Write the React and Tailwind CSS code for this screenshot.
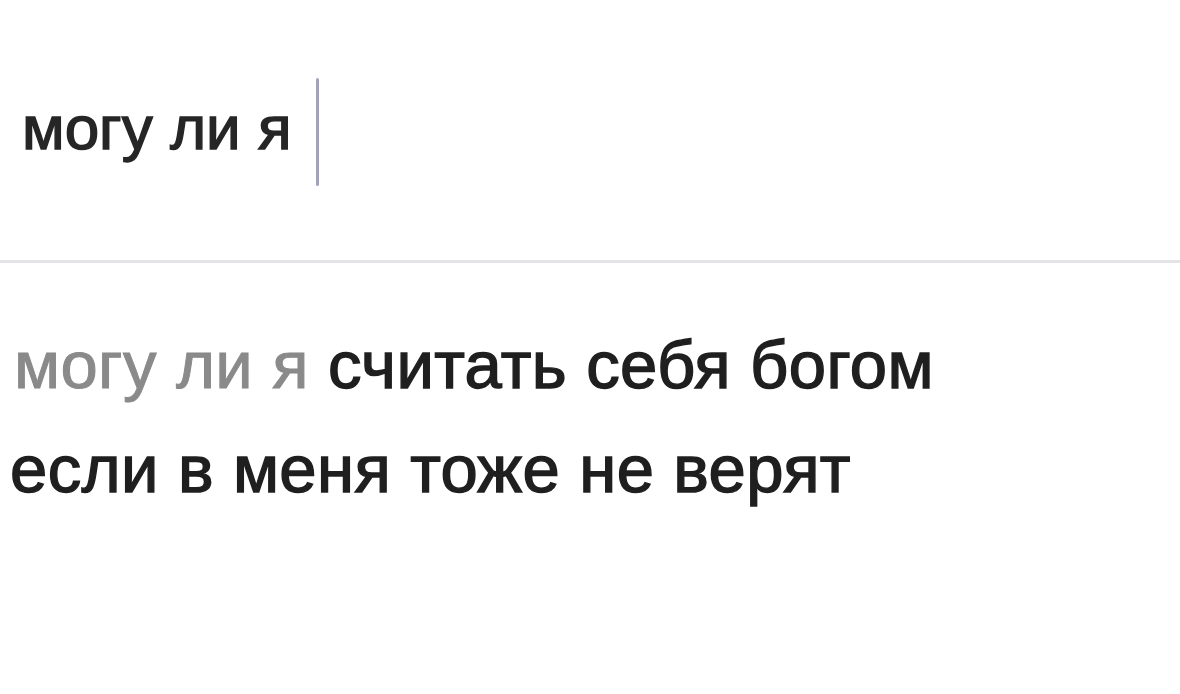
export default function App() {
  return (
    <div className="w-[1180px] h-[694px] bg-white overflow-hidden" style={{ fontFamily: '"Liberation Sans", Arial, sans-serif' }}>
      {/* search field */}
      <div className="h-[260px] flex items-start pl-[22px] pt-[78px]">
        <span className="text-[62px] leading-[72px] text-[#262626] mt-[14px] [-webkit-text-stroke:1.4px_#262626]">могу ли я</span>
        <span className="ml-[24px] w-[3px] h-[108px] bg-[#a3a3b8] rounded-full" />
      </div>
      {/* divider */}
      <div className="h-[3px] bg-[#e4e4e8]" />
      {/* suggestion */}
      <div className="pt-[49px] pl-[10px] text-[67px] leading-[106px] tracking-[0.4px] text-[#1f1f1f] [-webkit-text-stroke:1.4px_#1f1f1f]">
        <div className="pl-[4px]">
          <span className="text-[#8a8a8a] [-webkit-text-stroke:1px_#8a8a8a]">могу ли я</span> считать себя богом
        </div>
        <div className="-mt-[2px]">если в меня тоже не верят</div>
      </div>
    </div>
  );
}
